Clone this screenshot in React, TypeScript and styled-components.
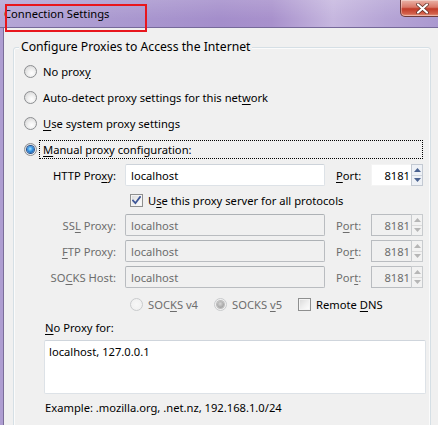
import React from 'react';
import styled, { createGlobalStyle, css } from 'styled-components';

const Global = createGlobalStyle`
  html, body { margin: 0; padding: 0; background: #f0f0f0; }
  body {
    font-family: "Noto Sans", "Open Sans", sans-serif;
    font-size: 11.2px;
    color: #000;
  }
  * { box-sizing: border-box; }
`;

const Window = styled.div`
  position: relative;
  width: 438px;
  height: 425px;
  overflow: hidden;
  display: flex;
  flex-direction: column;
  background: #f0f0f0;
`;

const TitleBar = styled.div`
  flex: none;
  height: 28px;
  display: flex;
  align-items: flex-start;
  padding-left: 4px;
  border-bottom: 1px solid #76699a;
  background:
    linear-gradient(180deg, rgba(255, 255, 255, 0.14) 0%, rgba(255, 255, 255, 0) 70%),
    linear-gradient(90deg, #b5a6d6 0%, #ab9ad0 25%, #a48ecb 50%, #a891cc 62%, #c6b7df 76%, #b6a5d6 88%, #aa98cf 100%);
`;

const TitleText = styled.div`
  font-size: 11.2px;
  line-height: 27px;
  color: #000;
`;

const CloseButton = styled.div`
  margin-left: auto;
  margin-right: -6px;
  width: 44px;
  height: 17px;
  display: flex;
  align-items: center;
  justify-content: center;
  border: 1px solid #6e3b3b;
  border-top: none;
  border-radius: 0 0 0 5px;
  background: linear-gradient(180deg, #eab3a8 0%, #d97767 45%, #c13a28 55%, #d2604b 85%, #e79a85 100%);
  box-shadow: inset 0 0 0 1px rgba(255, 255, 255, 0.35);
`;

const Annotation = styled.div`
  position: absolute;
  left: 5px;
  top: 4px;
  width: 142px;
  height: 28px;
  border: 2px solid #e8161d;
  pointer-events: none;
`;

const Body = styled.div`
  flex: 1;
  display: flex;
  flex-direction: column;
  border-left: 3px solid #ae9dd1;
  box-shadow: inset 1px 0 0 #7a6d99;
  padding: 0 0 0 10px;
`;

const Group = styled.div`
  position: relative;
  margin-top: 19px;
  width: 418px;
  border: 1px solid #d5dfe5;
  border-radius: 3px;
  box-shadow: inset 0 0 0 1px #fbfbfb;
  padding: 10px 7px 40px 10px;
  display: flex;
  flex-direction: column;
`;

const Legend = styled.div`
  position: absolute;
  left: 5px;
  top: -9px;
  padding: 0 2px;
  line-height: 16px;
  font-size: 12.2px;
  background: #f0f0f0;
`;

const Acc = styled.u`
  text-decoration: underline;
  text-underline-offset: 2px;
`;

const RadioRow = styled.div`
  height: 26px;
  display: flex;
  align-items: center;
  gap: 2px;
`;

const RadioCircle = styled.span<{ $checked?: boolean; $disabled?: boolean }>`
  flex: none;
  position: relative;
  width: 13px;
  height: 13px;
  border-radius: 50%;
  border: 1px solid ${(p) => (p.$disabled ? '#c9cbcd' : '#8c8e91')};
  background: ${(p) =>
    p.$disabled
      ? 'radial-gradient(circle at 50% 50%, #f7f7f7 0%, #eeeeee 100%)'
      : 'radial-gradient(circle at 60% 65%, #ffffff 0%, #f1f1f1 35%, #d9d9d9 80%, #cfcfcf 100%)'};
  ${(p) =>
    p.$checked &&
    css`
      &::after {
        content: '';
        position: absolute;
        left: 2px;
        top: 2px;
        width: 7px;
        height: 7px;
        border-radius: 50%;
        background: ${p.$disabled
          ? 'radial-gradient(circle at 45% 40%, #d8d8d8 0%, #a9a9a9 60%, #8f8f8f 100%)'
          : 'radial-gradient(circle at 45% 40%, #a8e4ff 0%, #3a9ae8 40%, #165aa8 80%, #123f78 100%)'};
        box-shadow: 0 0 0 1px ${p.$disabled ? '#bcbcbc' : '#24508f'};
      }
    `}
`;

const RadioLabel = styled.span`
  flex: none;
  height: 19px;
  display: flex;
  align-items: center;
  padding: 0 4px;
`;

const FocusLabel = styled.div`
  flex: 1 1 auto;
  min-width: 0;
  height: 19px;
  display: flex;
  align-items: center;
  padding: 0 3px;
  border: 1px dotted #000000;
`;

const ProxyRow = styled.div`
  height: 26px;
  display: flex;
  align-items: center;
  margin-left: 16px;
`;

const FieldLabel = styled.span<{ $disabled?: boolean }>`
  flex: none;
  width: 76px;
  text-align: right;
  white-space: nowrap;
  color: ${(p) => (p.$disabled ? '#6d6d6d' : '#000')};
`;

const TextBox = styled.div<{ $disabled?: boolean }>`
  flex: none;
  margin-left: 9px;
  width: 200px;
  height: 22px;
  display: flex;
  align-items: center;
  padding-left: 5px;
  border: 1px solid ${(p) => (p.$disabled ? '#b9bcc0' : '#dde2e7')};
  border-top-color: ${(p) => (p.$disabled ? '#adb1b5' : '#cdd3da')};
  border-radius: 2px;
  background: ${(p) => (p.$disabled ? '#f0f0f0' : '#ffffff')};
  color: ${(p) => (p.$disabled ? '#6d6d6d' : '#000')};
`;

const PortLabel = styled.span<{ $disabled?: boolean }>`
  flex: none;
  margin-left: 11px;
  width: 35px;
  color: ${(p) => (p.$disabled ? '#6d6d6d' : '#000')};
`;

const Spin = styled.div`
  flex: none;
  display: flex;
  height: 22px;
`;

const SpinField = styled.div<{ $disabled?: boolean }>`
  width: 40px;
  height: 22px;
  display: flex;
  align-items: center;
  justify-content: flex-end;
  padding-right: 1px;
  border: 1px solid ${(p) => (p.$disabled ? '#b9bcc0' : '#f4f4f4')};
  border-right: none;
  background: ${(p) => (p.$disabled ? '#f0f0f0' : '#ffffff')};
  color: ${(p) => (p.$disabled ? '#6d6d6d' : '#000')};
`;

const SpinButtons = styled.div<{ $disabled?: boolean }>`
  width: 12px;
  height: 22px;
  display: flex;
  flex-direction: column;
  border: 1px solid ${(p) => (p.$disabled ? '#c8cbce' : '#c3c9d2')};
  background: ${(p) => (p.$disabled ? '#f2f2f2' : '#eef1f6')};
`;

const SpinHalf = styled.div<{ $disabled?: boolean }>`
  flex: 1;
  display: flex;
  align-items: center;
  justify-content: center;
  &:first-child {
    border-bottom: 1px solid ${(p) => (p.$disabled ? '#dcdcdc' : '#cfd5de')};
  }
`;

const CheckRow = styled.div`
  height: 24px;
  display: flex;
  align-items: center;
  gap: 5px;
  margin-left: 106px;
`;

const CheckBoxBox = styled.span`
  flex: none;
  width: 13px;
  height: 13px;
  display: flex;
  align-items: center;
  justify-content: center;
  border: 1px solid #8e8f8f;
  background: linear-gradient(135deg, #d8d8d8 0%, #eeeeee 50%, #ffffff 100%);
  box-shadow: inset 0 0 0 1px #f4f4f4;
`;

const SocksRow = styled.div`
  height: 28px;
  display: flex;
  align-items: center;
  margin-left: 106px;
  gap: 16px;
`;

const Option = styled.span`
  display: flex;
  align-items: center;
  gap: 5px;
`;

const OptionText = styled.span<{ $disabled?: boolean }>`
  color: ${(p) => (p.$disabled ? '#6d6d6d' : '#000')};
`;

const PlainLabel = styled.div`
  height: 18px;
  display: flex;
  align-items: center;
  margin-left: 21px;
`;

const TextArea = styled.div`
  margin-top: 4px;
  margin-left: 20px;
  width: 382px;
  height: 54px;
  padding: 2px 4px;
  line-height: 18px;
  border: 1px solid #dde2e7;
  border-top-color: #cfd5dc;
  border-radius: 2px;
  background: #ffffff;
`;

const Example = styled(PlainLabel)`
  margin-top: 4px;
`;

const Check = () => (
  <svg width="9" height="9" viewBox="0 0 9 9">
    <path d="M1 4.6 L3.4 7.2 L8 1" fill="none" stroke="#3e5797" strokeWidth="1.8" strokeLinecap="square" />
  </svg>
);

const Arrow = ({ up, disabled }: { up?: boolean; disabled?: boolean }) => (
  <svg width="7" height="4" viewBox="0 0 7 4">
    <path d={up ? 'M0 4 L3.5 0 L7 4 Z' : 'M0 0 L3.5 4 L7 0 Z'} fill={disabled ? '#b6b6b6' : '#4a6290'} />
  </svg>
);

const PortSpin = ({ disabled }: { disabled?: boolean }) => (
  <Spin>
    <SpinField $disabled={disabled}>8181</SpinField>
    <SpinButtons $disabled={disabled}>
      <SpinHalf $disabled={disabled}>
        <Arrow up disabled={disabled} />
      </SpinHalf>
      <SpinHalf $disabled={disabled}>
        <Arrow disabled={disabled} />
      </SpinHalf>
    </SpinButtons>
  </Spin>
);

const CloseX = () => (
  <svg width="13" height="11" viewBox="0 0 13 11">
    <path d="M2 1.5 L11 9.5 M11 1.5 L2 9.5" stroke="#5a2a22" strokeWidth="3.6" strokeLinecap="round" />
    <path d="M2 1.5 L11 9.5 M11 1.5 L2 9.5" stroke="#ffffff" strokeWidth="2.2" strokeLinecap="round" />
  </svg>
);

type ProxyProps = {
  label: React.ReactNode;
  port: React.ReactNode;
  disabled?: boolean;
};

const Proxy = ({ label, port, disabled }: ProxyProps) => (
  <ProxyRow>
    <FieldLabel $disabled={disabled}>{label}</FieldLabel>
    <TextBox $disabled={disabled}>localhost</TextBox>
    <PortLabel $disabled={disabled}>{port}</PortLabel>
    <PortSpin disabled={disabled} />
  </ProxyRow>
);

export default function App() {
  return (
    <>
      <Global />
      <Window>
        <TitleBar>
          <TitleText>Connection Settings</TitleText>
          <CloseButton>
            <CloseX />
          </CloseButton>
        </TitleBar>
        <Body>
          <Group>
            <Legend>Configure Proxies to Access the Internet</Legend>
            <RadioRow>
              <RadioCircle />
              <RadioLabel>
                No prox<Acc>y</Acc>
              </RadioLabel>
            </RadioRow>
            <RadioRow>
              <RadioCircle />
              <RadioLabel>
                Auto-detect proxy settings for this net<Acc>w</Acc>ork
              </RadioLabel>
            </RadioRow>
            <RadioRow>
              <RadioCircle />
              <RadioLabel>
                <Acc>U</Acc>se system proxy settings
              </RadioLabel>
            </RadioRow>
            <RadioRow>
              <RadioCircle $checked />
              <FocusLabel>
                <span>
                  <Acc>M</Acc>anual proxy configuration:
                </span>
              </FocusLabel>
            </RadioRow>

            <Proxy
              label={
                <>
                  HTTP Pro<Acc>x</Acc>y:
                </>
              }
              port={
                <>
                  <Acc>P</Acc>ort:
                </>
              }
            />
            <CheckRow>
              <CheckBoxBox>
                <Check />
              </CheckBoxBox>
              <span>
                U<Acc>s</Acc>e this proxy server for all protocols
              </span>
            </CheckRow>
            <Proxy
              disabled
              label={
                <>
                  SS<Acc>L</Acc> Proxy:
                </>
              }
              port={
                <>
                  P<Acc>o</Acc>rt:
                </>
              }
            />
            <Proxy
              disabled
              label={
                <>
                  <Acc>F</Acc>TP Proxy:
                </>
              }
              port={
                <>
                  Po<Acc>r</Acc>t:
                </>
              }
            />
            <Proxy
              disabled
              label={
                <>
                  SO<Acc>C</Acc>KS Host:
                </>
              }
              port={
                <>
                  Por<Acc>t</Acc>:
                </>
              }
            />
            <SocksRow>
              <Option>
                <RadioCircle $disabled />
                <OptionText $disabled>
                  SOC<Acc>K</Acc>S v4
                </OptionText>
              </Option>
              <Option>
                <RadioCircle $disabled $checked />
                <OptionText $disabled>
                  SOCKS <Acc>v</Acc>5
                </OptionText>
              </Option>
              <Option>
                <CheckBoxBox />
                <OptionText>
                  Remote <Acc>D</Acc>NS
                </OptionText>
              </Option>
            </SocksRow>
            <PlainLabel>
              <span>
                <Acc>N</Acc>o Proxy for:
              </span>
            </PlainLabel>
            <TextArea>localhost, 127.0.0.1</TextArea>
            <Example>Example: .mozilla.org, .net.nz, 192.168.1.0/24</Example>
          </Group>
        </Body>
        <Annotation />
      </Window>
    </>
  );
}
